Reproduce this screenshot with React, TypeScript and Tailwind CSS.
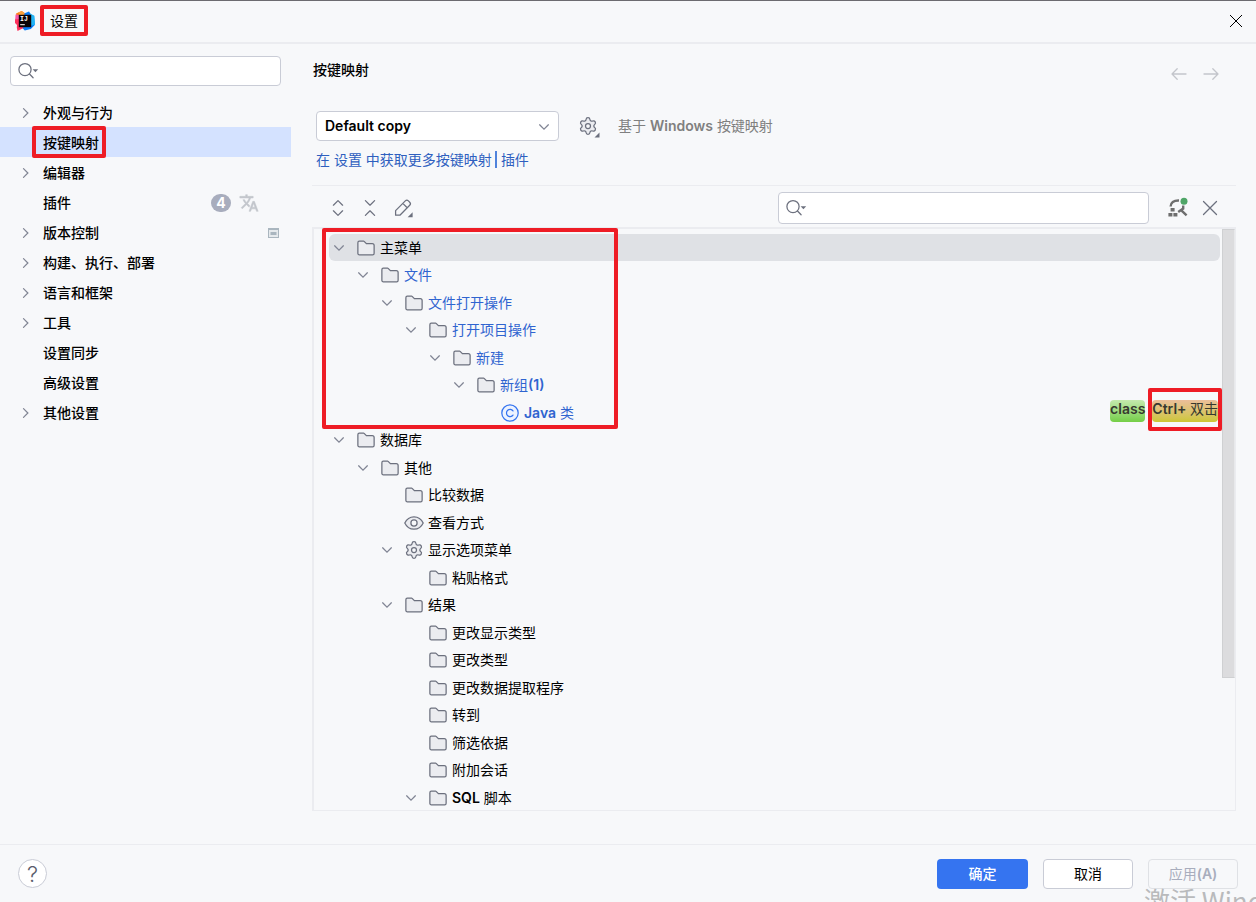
import { useState } from "react";
import type { ReactNode } from "react";

const LINE = "#6c707e";

function ChevronDown({ className = "" }: { className?: string }) {
  return (
    <svg className={className} width="20" height="20" viewBox="0 0 16 16" fill="none" stroke="#818594" strokeLinecap="round" aria-hidden="true">
      <path d="M11.5 6.25 8 9.75 4.5 6.25" />
    </svg>
  );
}

function ChevronRight() {
  return (
    <svg width="20" height="20" viewBox="0 0 16 16" fill="none" stroke="#818594" strokeLinecap="round" aria-hidden="true">
      <path d="M6 11.5 9.5 8 6 4.5" />
    </svg>
  );
}

function FolderIcon() {
  return (
    <svg width="20" height="20" viewBox="0 0 16 16" fill="#ebecf0" stroke={LINE} aria-hidden="true">
      <path d="M8.106 4.346 8.253 4.5H13C13.828 4.5 14.5 5.172 14.5 6v6.133c0 .82-.568 1.367-1.133 1.367H2.633c-.565 0-1.133-.547-1.133-1.367V3.867C1.5 3.047 2.068 2.5 2.633 2.5h3.489c.136 0 .266.056.36.154z" />
    </svg>
  );
}

function EyeIcon() {
  return (
    <svg width="20" height="20" viewBox="0 0 20 20" fill="none" stroke={LINE} strokeWidth="1.25" aria-hidden="true">
      <path d="M.8 10C2.6 6.2 6 3.8 10 3.8S17.4 6.2 19.2 10C17.4 13.8 14 16.2 10 16.2S2.6 13.8.8 10Z" fill="#ebecf0" />
      <circle cx="10" cy="10" r="3.1" fill="#f7f8fa" />
    </svg>
  );
}

function GearIcon() {
  return (
    <svg width="20" height="20" viewBox="0 0 24 24" fill="none" stroke={LINE} strokeWidth="1.5" strokeLinejoin="round" aria-hidden="true">
      <path fill="#ebecf0" d="M9.671 4.136a2.34 2.34 0 0 1 4.659 0 2.34 2.34 0 0 0 3.319 1.915 2.34 2.34 0 0 1 2.33 4.033 2.34 2.34 0 0 0 0 3.831 2.34 2.34 0 0 1-2.33 4.033 2.34 2.34 0 0 0-3.319 1.915 2.34 2.34 0 0 1-4.659 0 2.34 2.34 0 0 0-3.32-1.915 2.34 2.34 0 0 1-2.33-4.033 2.34 2.34 0 0 0 0-3.831A2.34 2.34 0 0 1 6.35 6.051a2.34 2.34 0 0 0 3.319-1.915" />
      <circle cx="12" cy="12" r="3" fill="#f7f8fa" />
    </svg>
  );
}

function ClassIcon() {
  return (
    <svg width="20" height="20" viewBox="0 0 20 20" fill="none" stroke="#3574f0" strokeWidth="1.25" aria-hidden="true">
      <circle cx="10" cy="10" r="8.2" fill="#edf3ff" />
      <path d="M13 7.9A3.6 3.6 0 1 0 13 12.1" strokeLinecap="round" />
    </svg>
  );
}

function SearchIcon() {
  return (
    <svg width="22" height="20" viewBox="0 0 22 20" fill="none" stroke={LINE} strokeWidth="1.25" aria-hidden="true">
      <circle cx="8" cy="8.6" r="6.1" />
      <path d="m12.5 13 3.6 3.8" strokeLinecap="round" />
      <path d="M15.6 8.3h5.6l-2.8 3z" fill={LINE} stroke="none" />
    </svg>
  );
}

function Logo() {
  return (
    <svg width="20" height="20" viewBox="0 0 20 20" aria-hidden="true">
      <path d="M1 2.5 6.5 0l4 2.5-6 8-4.5-1L1.5 6z" fill="#fc801d" />
      <path d="M9 2.5 14 .5l2 3 3 1.5.8 9-4 4-6 1.5-3-3z" fill="#087cfa" />
      <path d="m15 2.5 4.4 2.2.6 9-4.4 1z" fill="#21b4f5" />
      <path d="M0 8.5 4 6l1 9 4 1.8L2.5 20l-.7-3.6L2 14l-2-2z" fill="#fe315d" />
      <path d="M3.5 1.5 7 0l3 3-5 2.5z" fill="#f9a03c" />
      <path d="M.5 3.5 4 4v4l-3.8.5z" fill="#f857a6" />
      <rect x="3.8" y="3.8" width="12.4" height="12.4" fill="#0a0205" />
      <text x="5" y="10" fontSize="6.5" fontWeight="700" fill="#fff" fontFamily="Liberation Mono, monospace">IJ</text>
      <rect x="5.2" y="13.2" width="4.6" height="1" fill="#fff" />
    </svg>
  );
}

function HighlightFrame({ className }: { className: string }) {
  return <span aria-hidden="true" className={`pointer-events-none absolute z-10 rounded-xs border-4 border-[#ee1c25] ${className}`} />;
}

function SearchBox({ label, className }: { label: string; className: string }) {
  return (
    <label className={`flex items-center rounded border border-[#c9ccd6] bg-white pl-1.5 ${className}`}>
      <SearchIcon />
      <input type="search" aria-label={label} className="min-w-0 flex-1 bg-transparent px-1 outline-none" />
    </label>
  );
}

type Section = { name: string; open?: boolean; selected?: boolean; extra?: ReactNode };

const sections: Section[] = [
  { name: "外观与行为", open: false },
  { name: "按键映射", selected: true },
  { name: "编辑器", open: false },
  {
    name: "插件",
    extra: (
      <span className="mr-8 flex items-center gap-2">
        <span className="flex h-[18px] w-5 items-center justify-center rounded-full bg-[#a8adbd] font-bold text-white">4</span>
        <svg width="20" height="20" viewBox="0 0 24 24" fill="#c3c6cc" stroke="#c3c6cc" strokeWidth=".6" aria-hidden="true">
          <path d="m12.87 15.07-2.54-2.51.03-.03A17.5 17.5 0 0 0 14.07 6H17V4h-7V2H8v2H1v2h11.17C11.5 7.92 10.44 9.75 9 11.35 8.07 10.32 7.3 9.19 6.69 8h-2c.73 1.63 1.73 3.17 2.98 4.56l-5.09 5.02L4 19l5-5 3.11 3.11zM18.5 10h-2L12 22h2l1.12-3h4.75L21 22h2zm-2.62 7 1.62-4.33L19.12 17z" />
        </svg>
      </span>
    ),
  },
  {
    name: "版本控制",
    open: false,
    extra: (
      <svg className="mr-3" width="11" height="10" viewBox="0 0 11 10" aria-hidden="true">
        <rect width="11" height="10" fill="#aab6bf" />
        <rect x="1" y="2" width="9" height="7" fill="#e6eaed" />
        <rect x="2.5" y="4" width="6" height="3" fill="#aab6bf" />
      </svg>
    ),
  },
  { name: "构建、执行、部署", open: false },
  { name: "语言和框架", open: false },
  { name: "工具", open: false },
  { name: "设置同步" },
  { name: "高级设置" },
  { name: "其他设置", open: false },
];

type Node = { name: string; level: number; open?: boolean; icon?: "folder" | "eye" | "gear" | "class"; changed?: boolean; selected?: boolean; keys?: boolean };

const nodes: Node[] = [
  { name: "主菜单", level: 0, open: true, selected: true },
  { name: "文件", level: 1, open: true, changed: true },
  { name: "文件打开操作", level: 2, open: true, changed: true },
  { name: "打开项目操作", level: 3, open: true, changed: true },
  { name: "新建", level: 4, open: true, changed: true },
  { name: "新组(1)", level: 5, open: true, changed: true },
  { name: "Java 类", level: 6, icon: "class", changed: true, keys: true },
  { name: "数据库", level: 0, open: true },
  { name: "其他", level: 1, open: true },
  { name: "比较数据", level: 2 },
  { name: "查看方式", level: 2, icon: "eye" },
  { name: "显示选项菜单", level: 2, open: true, icon: "gear" },
  { name: "粘贴格式", level: 3 },
  { name: "结果", level: 2, open: true },
  { name: "更改显示类型", level: 3 },
  { name: "更改类型", level: 3 },
  { name: "更改数据提取程序", level: 3 },
  { name: "转到", level: 3 },
  { name: "筛选依据", level: 3 },
  { name: "附加会话", level: 3 },
  { name: "SQL 脚本", level: 3, open: true },
];

/* Latin runs are set semibold beside regular-weight Chinese text. */
function Mixed({ text }: { text: string }) {
  return (
    <>
      {text.split(/([A-Za-z0-9()+]+)/).map((part, i) =>
        i % 2 ? <span key={i} className="font-semibold">{part}</span> : part
      )}
    </>
  );
}

function TreeRow({ node }: { node: Node }) {
  return (
    <li
      role="treeitem"
      aria-level={node.level + 1}
      aria-expanded={node.open}
      aria-selected={!!node.selected}
      className={`flex items-center rounded-md odd:h-[27px] even:h-7 ${node.selected ? "bg-[#dfe1e5]" : ""} ${node.changed ? "text-[#2f64d0]" : "text-black"}`}
      style={{ paddingLeft: node.level * 24 }}
    >
      <span className="flex w-[27px] shrink-0">{node.open && <ChevronDown />}</span>
      {node.icon === "eye" ? <EyeIcon /> : node.icon === "gear" ? <GearIcon /> : node.icon === "class" ? <ClassIcon /> : <FolderIcon />}
      <span className="ml-1 whitespace-pre leading-5"><Mixed text={node.name} /></span>
      {node.keys && (
        <span className="mr-0.5 mb-1 ml-auto flex gap-[7px] font-semibold text-[#37392f]">
          <span className="h-[22px] rounded-sm bg-linear-to-b from-[#c4eaad] to-[#74ce45] leading-[18px]">class</span>
          <span className="relative h-[22px] rounded-sm bg-linear-to-b from-[#ebbe99] to-[#cdc732] leading-[18px]">
            Ctrl+ <span className="font-normal">双击</span>
            <HighlightFrame className="-inset-x-1 -top-3 -bottom-[9px]" />
          </span>
        </span>
      )}
    </li>
  );
}

export default function App() {
  const [scheme, setScheme] = useState("Default copy");
  return (
    <div className="relative flex min-h-screen flex-col overflow-hidden border-t border-[#6c6b70] bg-[#f7f8fa] font-['Inter','Noto_Sans_CJK_SC',sans-serif] text-sm text-black">
      <header className="flex h-[43px] items-center border-b-2 border-[#ebecf0] pr-3 pb-0.5 pl-[15px]">
        <Logo />
        <h1 className="relative ml-[15px] leading-5">
          设置
          <HighlightFrame className="-inset-x-[10px] -top-[6px] -bottom-[5px]" />
        </h1>
        <button type="button" aria-label="关闭" className="ml-auto">
          <svg width="16" height="16" viewBox="0 0 16 16" stroke="#000" strokeWidth="1" aria-hidden="true">
            <path d="m2 2 12 12M14 2 2 14" />
          </svg>
        </button>
      </header>

      <div className="flex flex-1">
        <nav aria-label="设置" className="w-[291px] shrink-0 pt-3">
          <SearchBox label="搜索设置" className="mr-[10px] ml-[10px] h-[30px]" />
          <ul className="mt-[11px] font-medium">
            {sections.map((s) => (
              <li key={s.name} className={`flex h-[30px] items-center pt-0.5 pl-4 ${s.selected ? "bg-[#d4e2ff]" : ""}`}>
                <span className="flex w-[27px] shrink-0">{s.open === false && <ChevronRight />}</span>
                <a href="#" aria-current={s.selected ? "page" : undefined} className="relative leading-5">
                  {s.name}
                  {s.selected && <HighlightFrame className="-top-[7px] -right-[7px] -bottom-[5px] -left-[11px]" />}
                </a>
                {s.extra && <span className="ml-auto">{s.extra}</span>}
              </li>
            ))}
          </ul>
        </nav>

        <main className="flex min-w-0 flex-1 flex-col pr-5 pb-[33px] pl-[21px]">
          <div className="flex h-[67px] items-start justify-between">
            <h2 className="mt-4 ml-px font-medium leading-5">按键映射</h2>
            <div className="mt-5 mr-[15px] flex gap-3">
              <button type="button" aria-label="后退" disabled>
                <svg width="20" height="20" viewBox="0 0 20 20" fill="none" stroke="#c3c5cb" strokeWidth="1.3" strokeLinecap="round" strokeLinejoin="round" aria-hidden="true">
                  <path d="M17 10H3.2M8.2 4.8 3 10l5.2 5.2" />
                </svg>
              </button>
              <button type="button" aria-label="前进" disabled>
                <svg width="20" height="20" viewBox="0 0 20 20" fill="none" stroke="#c3c5cb" strokeWidth="1.3" strokeLinecap="round" strokeLinejoin="round" aria-hidden="true">
                  <path d="M3 10h13.8M11.8 4.8 17 10l-5.2 5.2" />
                </svg>
              </button>
            </div>
          </div>

          <div className="flex items-center pl-1">
            <div className="grid w-[243px] items-center">
              <select
                aria-label="按键映射方案"
                value={scheme}
                onChange={(e) => setScheme(e.target.value)}
                className="col-start-1 row-start-1 h-[30px] w-full appearance-none rounded border border-[#c9ccd6] bg-white pl-2 font-semibold"
              >
                <option>Default copy</option>
                <option>Windows</option>
              </select>
              <ChevronDown className="pointer-events-none col-start-1 row-start-1 mt-0.5 mr-[5px] justify-self-end" />
            </div>
            <button type="button" aria-label="方案操作" className="relative ml-[19px]">
              <GearIcon />
              <svg className="absolute -right-0.5 -bottom-0.5" width="6" height="6" viewBox="0 0 6 6" fill={LINE} aria-hidden="true">
                <path d="M5.5.5v5h-5z" />
              </svg>
            </button>
            <span className="ml-5 text-[#808080]">
              <Mixed text="基于 Windows 按键映射" />
            </span>
          </div>

          <p className="mt-[9px] pl-1 leading-5 text-[#2e5fbf]">
            <a href="#">在 设置 中获取更多按键映射</a>
            <span className="mr-1 ml-[3px] inline-block h-[17px] w-0.5 bg-[#4f83dc] align-[-3px]" />
            <a href="#">插件</a>
          </p>

          <div className="mt-[15px] flex h-[42px] items-center border-t border-[#ebecf0] pt-0.5 pl-4">
            <button type="button" aria-label="全部展开">
              <svg width="20" height="20" viewBox="0 0 20 20" fill="none" stroke={LINE} strokeWidth="1.25" strokeLinecap="round" strokeLinejoin="round" aria-hidden="true">
                <path d="m5.4 7.2 4.6-4.6 4.6 4.6M5.4 12.8l4.6 4.6 4.6-4.6" />
              </svg>
            </button>
            <button type="button" aria-label="全部折叠" className="ml-3">
              <svg width="20" height="20" viewBox="0 0 20 20" fill="none" stroke={LINE} strokeWidth="1.25" strokeLinecap="round" strokeLinejoin="round" aria-hidden="true">
                <path d="M5.4 2.6 10 7.2l4.6-4.6M5.4 17.4l4.6-4.6 4.6 4.6" />
              </svg>
            </button>
            <button type="button" aria-label="编辑快捷键" className="ml-3">
              <svg width="24" height="20" viewBox="0 0 24 20" fill="none" stroke={LINE} strokeWidth="1.25" strokeLinejoin="round" aria-hidden="true">
                <path d="M3.6 17.2v-4.6L13.3 2.9a2.2 2.2 0 0 1 3.1 0l1.3 1.3a2.2 2.2 0 0 1 0 3.1L7.9 17.2zM10.8 5.4l4.4 4.4" />
                <path d="M20.6 14.2v5h-5z" fill={LINE} stroke="none" />
              </svg>
            </button>
            <SearchBox label="搜索快捷键" className="ml-auto h-8 w-[371px]" />
            <button type="button" aria-label="按快捷键查找" className="ml-[18px]">
              <svg width="22" height="22" viewBox="0 0 22 22" fill="none" aria-hidden="true">
                <path d="M3.6 9.6C3.6 5.6 6.6 3.3 12 3.5" stroke="#6e6e6e" strokeWidth="2.4" />
                <path d="M16.2 8.4v3.2l-5 3.4M14.6 13.6l5 4.8" stroke="#6e6e6e" strokeWidth="2.4" />
                <path d="M3.6 11h4v3.6h-4zM1.4 16h4v3.6h-4zM6.4 16h4v3.6h-4z" fill="#6e6e6e" />
                <circle cx="17" cy="4.2" r="3.5" fill="#4fa567" />
              </svg>
            </button>
            <button type="button" aria-label="清除" className="mr-4 ml-[11px]">
              <svg width="20" height="20" viewBox="0 0 20 20" stroke={LINE} strokeWidth="1.25" strokeLinecap="round" aria-hidden="true">
                <path d="m3.5 3.5 13 13M16.5 3.5l-13 13" />
              </svg>
            </button>
          </div>

          <div className="relative flex flex-1 border border-t-2 border-l-2 border-[#ebecf0]">
            <ul role="tree" aria-label="快捷键" className="-mb-px min-w-0 flex-1 pt-[5px] pl-[15px]">
              {nodes.map((n) => (
                <TreeRow key={n.name} node={n} />
              ))}
            </ul>
            <div className="ml-0.5 w-[13px] shrink-0" aria-hidden="true">
              <div className="h-[449px] border border-[#cfd0d2] border-r-[#e8e9eb] bg-[#dcdcde]" />
            </div>
            <HighlightFrame className="-top-px left-2 h-[201px] w-[296px]" />
          </div>
        </main>
      </div>

      <footer className="flex h-[58px] items-center gap-[15px] border-t border-[#ebecf0] pr-[18px] pl-[18px]">
        <button type="button" aria-label="帮助" className="mr-auto flex size-[29px] items-center justify-center rounded-full border border-[#c9ccd6] bg-white text-[22px] font-light leading-none text-[#5a5d6b]">
          ?
        </button>
        <button type="button" className="h-[30px] w-[91px] rounded bg-[#3574f0] font-medium text-white">确定</button>
        <button type="button" className="h-[30px] w-[90px] rounded border border-[#c9ccd6] bg-white">取消</button>
        <button type="button" disabled className="h-[30px] w-[90px] rounded border border-[#dfe1e5] text-[#a8adbd]">
          <Mixed text="应用(A)" />
        </button>
      </footer>
      <div aria-hidden="true" className="pointer-events-none absolute -right-14 bottom-0 h-[18px] w-[168px] overflow-hidden font-['Noto_Sans_CJK_SC',sans-serif] text-[26px] leading-8 whitespace-nowrap text-[#b9babc]">
        激活 Windows
      </div>
    </div>
  );
}
